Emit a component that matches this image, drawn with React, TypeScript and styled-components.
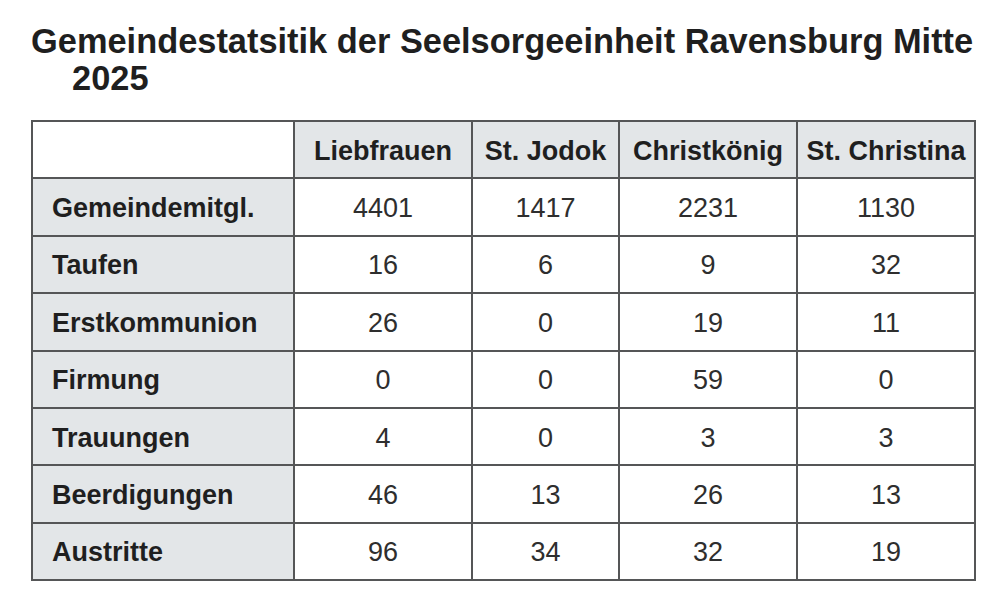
import React from "react";
import styled, { createGlobalStyle } from "styled-components";

const GlobalStyle = createGlobalStyle`
  html, body {
    margin: 0;
    padding: 0;
    background: #ffffff;
  }
  body {
    font-family: "Liberation Sans", Arial, Helvetica, sans-serif;
  }
`;

const Page = styled.div`
  width: 1000px;
  height: 613px;
  box-sizing: border-box;
  padding: 23px 0 0 31px;
  background: #ffffff;
  overflow: hidden;
`;

const Title = styled.h1`
  margin: 0 0 23px 0;
  font-family: "Liberation Sans", Arial, Helvetica, sans-serif;
  font-weight: 700;
  font-size: 34.4px;
  line-height: 37px;
  color: #1f1f1f;
  letter-spacing: 0;
`;

const TitleLine = styled.span<{ $indent?: number }>`
  display: block;
  padding-left: ${(p) => p.$indent ?? 0}px;
  white-space: nowrap;
`;

const Table = styled.table`
  border-collapse: collapse;
  table-layout: fixed;
  width: 943px;
  font-family: "Liberation Sans", Arial, Helvetica, sans-serif;
  font-size: 27px;
  color: #2b2b2b;
`;

const Cell = styled.td<{ $shade?: boolean; $head?: boolean; $left?: boolean }>`
  border: 2px solid #555657;
  height: 57.4px;
  padding: 3px 0 0 ${(p) => (p.$left ? "19px" : "0")};
  box-sizing: border-box;
  background: ${(p) => (p.$shade ? "#e3e6e8" : "#ffffff")};
  font-weight: ${(p) => (p.$head ? 700 : 400)};
  color: ${(p) => (p.$head ? "#1f1f1f" : "#2e2e2e")};
  text-align: ${(p) => (p.$left ? "left" : "center")};
  vertical-align: middle;
  white-space: nowrap;
`;

const parishes = ["Liebfrauen", "St. Jodok", "Christkönig", "St. Christina"];

const rows: { label: string; values: number[] }[] = [
  { label: "Gemeindemitgl.", values: [4401, 1417, 2231, 1130] },
  { label: "Taufen", values: [16, 6, 9, 32] },
  { label: "Erstkommunion", values: [26, 0, 19, 11] },
  { label: "Firmung", values: [0, 0, 59, 0] },
  { label: "Trauungen", values: [4, 0, 3, 3] },
  { label: "Beerdigungen", values: [46, 13, 26, 13] },
  { label: "Austritte", values: [96, 34, 32, 19] },
];

const colWidths = [262, 178, 147, 178, 178];

export default function App() {
  return (
    <>
      <GlobalStyle />
      <Page>
        <Title>
          <TitleLine>Gemeindestatsitik der Seelsorgeeinheit Ravensburg Mitte</TitleLine>
          <TitleLine $indent={41}>2025</TitleLine>
        </Title>
        <Table>
          <colgroup>
            {colWidths.map((w, i) => (
              <col key={i} style={{ width: w }} />
            ))}
          </colgroup>
          <thead>
            <tr>
              <Cell as="th" />
              {parishes.map((p) => (
                <Cell as="th" key={p} $shade $head>
                  {p}
                </Cell>
              ))}
            </tr>
          </thead>
          <tbody>
            {rows.map((r) => (
              <tr key={r.label}>
                <Cell as="th" $shade $head $left>
                  {r.label}
                </Cell>
                {r.values.map((v, i) => (
                  <Cell key={i}>{v}</Cell>
                ))}
              </tr>
            ))}
          </tbody>
        </Table>
      </Page>
    </>
  );
}
